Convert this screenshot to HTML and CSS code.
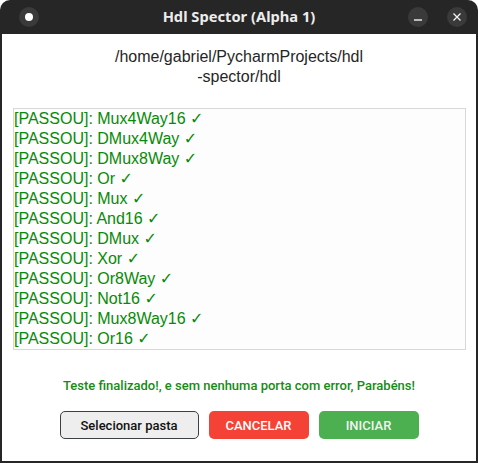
FILE: index.html
```html
<!DOCTYPE html>
<html lang="pt">
<head>
<meta charset="utf-8">
<title>Hdl Spector (Alpha 1)</title>
<link rel="stylesheet" href="styles.css">
</head>
<body>
<div class="window">
  <div class="titlebar">
    <span class="tb-btn tb-menu"><span class="dot"></span></span>
    <span class="title">Hdl Spector (Alpha 1)</span>
    <div class="tb-right">
      <span class="tb-btn">
        <svg width="20" height="20" viewBox="0 0 20 20"><line x1="6" y1="13" x2="14" y2="13" stroke="#f2f2f2" stroke-width="1.4"/></svg>
      </span>
      <span class="tb-btn">
        <svg width="20" height="20" viewBox="0 0 20 20"><path d="M6.5 6.5 L13.5 13.5 M13.5 6.5 L6.5 13.5" stroke="#f2f2f2" stroke-width="1.3" fill="none"/></svg>
      </span>
    </div>
  </div>
  <div class="content">
    <div class="path">/home/gabriel/PycharmProjects/hdl<br>-spector/hdl</div>
    <div class="log">
      <div class="line">[PASSOU]: Mux4Way16 ✓</div>
      <div class="line">[PASSOU]: DMux4Way ✓</div>
      <div class="line">[PASSOU]: DMux8Way ✓</div>
      <div class="line">[PASSOU]: Or ✓</div>
      <div class="line">[PASSOU]: Mux ✓</div>
      <div class="line">[PASSOU]: And16 ✓</div>
      <div class="line">[PASSOU]: DMux ✓</div>
      <div class="line">[PASSOU]: Xor ✓</div>
      <div class="line">[PASSOU]: Or8Way ✓</div>
      <div class="line">[PASSOU]: Not16 ✓</div>
      <div class="line">[PASSOU]: Mux8Way16 ✓</div>
      <div class="line">[PASSOU]: Or16 ✓</div>
    </div>
    <div class="status">Teste finalizado!, e sem nenhuma porta com error, Parabéns!</div>
    <div class="actions">
      <button class="btn btn-select">Selecionar pasta</button>
      <button class="btn btn-cancel">CANCELAR</button>
      <button class="btn btn-start">INICIAR</button>
    </div>
  </div>
</div>
</body>
</html>
```
FILE: styles.css
```css
html, body {
  margin: 0;
  padding: 0;
  background: #ffffff;
}
.window {
  width: 478px;
  height: 463px;
  box-sizing: border-box;
  background: #262626;
  border-radius: 10px 10px 0 0;
  padding: 0 2px 2px 2px;
  display: flex;
  flex-direction: column;
}
.titlebar {
  height: 34px;
  flex: none;
  display: flex;
  align-items: center;
  position: relative;
  padding: 0 9px 0 17px;
}
.title {
  position: absolute;
  left: 0;
  right: 0;
  text-align: center;
  font-family: "Noto Sans", "DejaVu Sans", sans-serif;
  font-weight: 700;
  font-size: 14.7px;
  color: #ececec;
  top: 6px;
  line-height: 20px;
  pointer-events: none;
}
.tb-btn {
  width: 20px;
  height: 20px;
  border-radius: 50%;
  background: #3a3a3a;
  display: flex;
  align-items: center;
  justify-content: center;
  position: relative;
}
.tb-btn svg { display: block; }
.dot {
  width: 8px;
  height: 8px;
  border-radius: 50%;
  background: #ffffff;
}
.tb-right {
  margin-left: auto;
  display: flex;
  gap: 19px;
}
.content {
  flex: 1;
  background: #ffffff;
  display: flex;
  flex-direction: column;
  padding-top: 13px;
}
.path {
  font-family: "Liberation Sans", Arial, sans-serif;
  font-size: 16px;
  line-height: 20px;
  color: #262626;
  text-align: center;
}
.log {
  margin: 21px 10px 0 11px;
  height: 242px;
  box-sizing: border-box;
  border: 1px solid #d8d8d8;
  background: #fdfdfd;
  padding-left: 0;
}
.line {
  font-family: "Liberation Sans", Arial, "DejaVu Sans", sans-serif;
  font-size: 16px;
  line-height: 20px;
  color: #078a07;
  white-space: nowrap;
}
.status {
  margin-top: 27px;
  text-align: center;
  font-family: Roboto, "Noto Sans", sans-serif;
  font-weight: 500;
  font-size: 13px;
  line-height: 17px;
  color: #168b16;
}
.actions {
  margin-top: 17px;
  display: flex;
  justify-content: center;
  gap: 10px;
}
.btn {
  height: 28px;
  box-sizing: border-box;
  border-radius: 5px;
  font-family: Roboto, "Noto Sans", sans-serif;
  font-weight: 500;
  font-size: 13px;
  padding: 0;
  cursor: pointer;
}
.btn-select {
  width: 139px;
  background: #eeeeee;
  border: 1px solid #3c3f44;
  color: #111111;
}
.btn-cancel {
  width: 100px;
  background: #f44336;
  border: none;
  color: #ffffff;
}
.btn-start {
  width: 100px;
  background: #4caf50;
  border: none;
  color: #f2f2f2;
}
```
